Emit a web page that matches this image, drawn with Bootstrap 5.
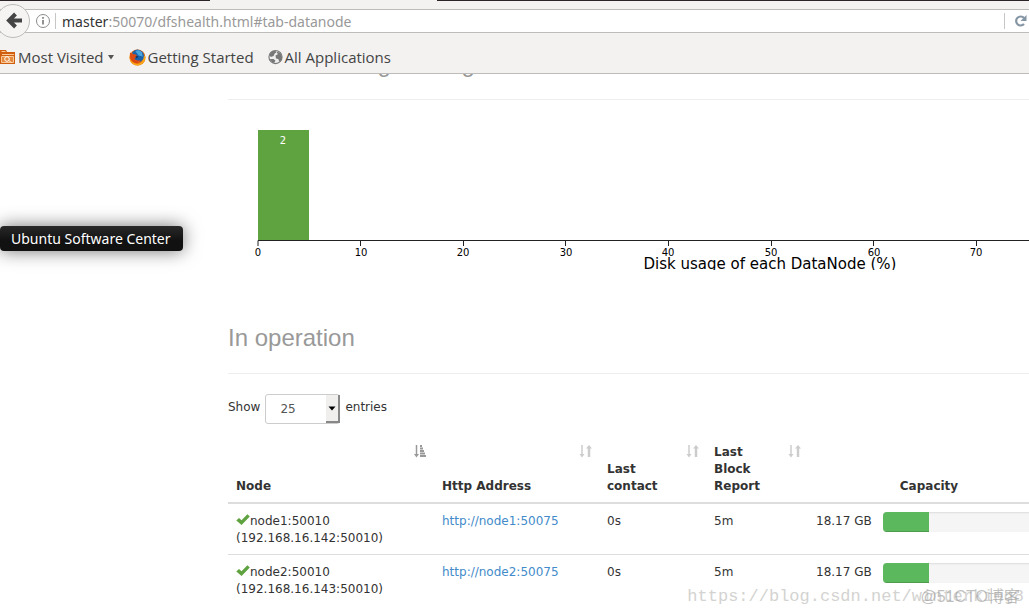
<!DOCTYPE html>
<html lang="en">
<head>
<meta charset="utf-8">
<meta name="viewport" content="width=device-width, initial-scale=1">
<title>Namenode information</title>
<link href="https://cdn.jsdelivr.net/npm/bootstrap@5.3.0/dist/css/bootstrap.min.css" rel="stylesheet">
<style>
body{font-family:"DejaVu Sans",sans-serif;font-size:12px;line-height:17px;color:#333;background:#fff;overflow:hidden}

/* browser frame */
.chrome-bar{background:#f3f2f1;border-bottom:1px solid #bebcb9;font-family:"Open Sans",sans-serif;font-size:15px}
.tab-strip{height:9px}
.tab-strip span{height:1px;background:#2c2428}
.tab-left{width:210px}
.tab-gap{width:227px}
.url-row{height:24px;background:#fff;border-top:1px solid #bebcb9;border-bottom:1px solid #bebcb9;padding-left:35px;font-family:"Noto Sans",sans-serif;font-size:14px}
.back-btn{width:34px;height:34px;left:-4px;top:-6px;border:1px solid #bebcb9;background:#f5f4f3;border-radius:50%;position:absolute;line-height:0}
.url-text{padding-left:6px}
.url-host{color:#333}
.url-rest{color:#999}
.v-line{width:1px;height:16px;background:#c8c6c4}
.bookmarks{height:40px;padding-top:8px;gap:14px}
.bookmarks a{color:#444;text-decoration:none;line-height:20px;gap:2px}
.bookmarks .caret{margin-left:1px}

/* page */
.main-area{margin-left:228px;overflow:hidden}
.section-title{font-family:"Liberation Sans",sans-serif;font-size:24px;line-height:26px;color:#999;font-weight:400;border-bottom:1px solid #eee;margin:0;padding-bottom:22px}
.scrolled-title{height:26px;overflow:hidden;display:flex;flex-direction:column;justify-content:flex-end}
.scrolled-title .section-title{white-space:nowrap}
.chart{display:block;width:1140px;height:170px;overflow:hidden}
.chart text{font-size:10px;text-anchor:middle}
.chart .axis-title{font-size:15px}
.operation-title{margin-top:55px}
.length-row{margin-top:20px;gap:5px;height:30px}
.length-row label{padding-top:5px}
.entries-select{width:75px;height:30px;border:1px solid #ccc;border-radius:3px;font-size:12px;color:#555;padding:0 14px;appearance:none;background:#fff}
.select-arrow{position:absolute;right:0;top:1px;width:14px;height:28px;background:#f0efee;border-right:2px solid #888;border-bottom:2px solid #888;pointer-events:none}

/* node table */
.table-wrap{margin-top:11px;overflow:hidden}
.node-table{width:calc(100% + 21px);min-width:822px;table-layout:fixed;color:#333;margin:0}
.node-table>:not(caption)>*>*{padding:9px 8px 7px;border:0;box-shadow:none;color:#333}
.node-table>thead>tr>th{vertical-align:bottom;border-bottom:2px solid #ddd;position:relative}
.node-table>tbody>tr+tr>td{border-top:1px solid #ddd}
.node-table a{color:#428bca;text-decoration:none}
.sort-icon{position:absolute;right:7px;top:9px;width:14px;height:14px}
.tick-mark{vertical-align:-1px}
.col-node{width:206px}
.col-http{width:165px}
.col-contact{width:107px}
.col-report{width:102px}
.cap-bar{height:20px;margin-top:-1px;border-radius:4px;background:#f5f5f5;box-shadow:inset 0 1px 2px rgba(0,0,0,.1)}
.cap-bar .progress-bar{background:#5cb85c;box-shadow:inset 0 -1px 0 rgba(0,0,0,.15)}
.cap-text{width:67px;white-space:nowrap}

/* overlays */
.launcher-tip{position:absolute;left:0;top:226px;height:25px;padding:0 12px 0 11px;line-height:25px;border-radius:4px;background:linear-gradient(#292929,#111 60%);color:#fff;font-family:"Noto Sans",sans-serif;font-size:14px;box-shadow:0 0 18px rgba(0,0,0,.55)}
.stamp-url{position:absolute;right:5px;top:586px;font:17px/22px "Liberation Mono",monospace;color:#d3d3d1}
.stamp-site{position:absolute;right:9px;top:587px;font:16px/20px "Liberation Sans","Noto Sans CJK SC",sans-serif;color:rgba(150,150,150,.6)}
</style>
</head>
<body class="position-relative min-vh-100">
<svg width="0" height="0" class="position-absolute">
  <symbol id="sort-both" viewBox="0 0 14 14"><path d="M1.500 10h5L4 13.500zM8 4.500h6L11 1z" fill="#ccc"/><path d="M4 1v10" stroke="#ccc" stroke-width="1.500"/><path d="M11 4v9" stroke="#ccc" stroke-width="2.500"/></symbol>
  <symbol id="sort-asc" viewBox="0 0 14 14"><path d="M1 10h5L3.500 13.500z" fill="#999"/><path d="M3.500 1v10" stroke="#999" stroke-width="1.500"/><path d="M7 2h2M7 4.500h3M7 7h4M7 9.500h5M7 12h6" stroke="#999" stroke-width="1.900"/></symbol>
  <symbol id="check" viewBox="0 0 14 12"><path d="M.3 6.600 3 4l2.500 2.300L11.400.3l2.400 2.300L5.600 11z" fill="#5fa341"/></symbol>
</svg>
<header class="chrome-bar">
  <div class="tab-strip d-flex"><span class="tab-left"></span><div class="tab-gap"></div><span class="flex-grow-1"></span></div>
  <div class="url-row d-flex align-items-center position-relative">
    <button class="back-btn p-0" type="button" aria-label="Back"><svg width="32" height="32" viewBox="0 0 32 32"><path d="M18.500 9 12 15.500l6.500 6.500M13 15.500h12" fill="none" stroke="#444" stroke-width="4"/></svg></button>
    <svg width="16" height="16" viewBox="0 0 16 16"><circle cx="8" cy="8" r="6.500" fill="none" stroke="#8c8c8c"/><path d="M8 7v4.500M8 4v1.800" stroke="#777" stroke-width="1.600"/></svg>
    <div class="v-line ms-1"></div>
    <div class="flex-grow-1 url-text" role="textbox" aria-label="Address"><span class="url-host">master</span><span class="url-rest">:50070/dfshealth.html#tab-datanode</span></div>
    <div class="v-line"></div>
    <button class="btn p-0 border-0 d-flex ms-2" type="button" aria-label="Reload"><svg width="16" height="14" viewBox="0 0 16 14"><path d="M11 4A4.500 4.500 0 1 0 11 10" fill="none" stroke="#8495a3" stroke-width="2.200"/><path d="M13.500 1v6h-6z" fill="#8495a3"/></svg></button>
  </div>
  <nav class="bookmarks d-flex align-items-center">
    <a href="#" class="d-flex align-items-center"><svg width="16" height="16" viewBox="0 0 16 16"><path d="M0 1h6l1 2h8v12H0z" fill="#cf5f0e"/><path d="M1.500 2.500h4M2 5.500h12M1.500 7.500v6h12v-6z" stroke="#f9c894" fill="#e58a3c"/><circle cx="7" cy="10" r="2.300" fill="none" stroke="#fff"/><path d="m9 11.500 2 2" stroke="#fff"/></svg>Most Visited<svg class="caret" width="8" height="6" viewBox="0 0 8 6"><path d="M1 1h6L4 5.500z" fill="#555"/></svg></a>
    <a href="#" class="d-flex align-items-center"><svg width="17" height="17" viewBox="0 0 16 16"><circle cx="8" cy="8" r="7.500" fill="#e8690b"/><path d="M3 3Q8-2 13 3l2 5-4 4-6-2z" fill="#1c62ab"/><path d="M6 2q4-2 6 1l1 4-4-1z" fill="#49a5dd"/><path d="M1 3q-1 6 2 9 5 4 9 0 2-2 2-6l1.400 1Q16 13 10 15.300 4 16.500 1 11 0 7 1 3z" fill="#f7a81b"/><path d="M1 3l2 2 3 0 2 2-3 2q2 3 6 1-2 4-6 3Q0 11 1 3z" fill="#dd4a12"/><path d="M6 7q2-1 3 0l-2 2z" fill="#15365f"/></svg>Getting Started</a>
    <a href="#" class="d-flex align-items-center"><svg width="15" height="16" viewBox="0 0 16 16"><circle cx="8" cy="8" r="7" fill="#eee" stroke="#777" stroke-width="1.200"/><path d="M1.500 6Q2 3 5 1.500l3 0 1 1.500-2 1.500-1 2.500-3 1zM9 2l4 1.500L15 8l-1 3.500-2 1.500-1-3-2.500-.5L8 6.500 10.500 5zM2 10l4 0 2 2-1.500 2.500q-3-1-4.500-4.500z" fill="#777"/></svg>All Applications</a>
  </nav>
</header>
<main class="main-area">
  <div class="scrolled-title"><h3 class="section-title">Datanode usage histogram</h3></div>
  <svg class="chart" viewBox="0 0 1140 170" role="img" aria-label="Disk usage of each DataNode">
    <rect x="30" y="30" width="51" height="111" fill="#5fa341"/>
    <text x="55" y="44" fill="#fff">2</text>
    <path d="M30 146v-5.500H1057V146M132.500 140v6M235.500 140v6M337.500 140v6M440.500 140v6M543.500 140v6M645.500 140v6M748.500 140v6" fill="none" stroke="#222"/>
    <text x="30" y="156">0</text><text x="133" y="156">10</text><text x="235" y="156">20</text><text x="338" y="156">30</text><text x="440" y="156">40</text><text x="543" y="156">50</text><text x="646" y="156">60</text><text x="748" y="156">70</text>
    <text class="axis-title" x="542" y="169">Disk usage of each DataNode (%)</text>
  </svg>
  <h3 class="section-title operation-title">In operation</h3>
  <div class="length-row d-flex">
    <label for="entries">Show</label>
    <div class="position-relative">
      <select id="entries" class="entries-select"><option>10</option><option selected>25</option><option>50</option></select>
      <span class="select-arrow d-flex align-items-center justify-content-center"><svg width="8" height="5" viewBox="0 0 8 5"><path d="M.5.5h7L4 4.500z"/></svg></span>
    </div>
    <label for="entries">entries</label>
  </div>
  <div class="table-wrap">
    <table class="table node-table">
      <colgroup><col class="col-node"><col class="col-http"><col class="col-contact"><col class="col-report"><col></colgroup>
      <thead>
        <tr>
          <th>Node<svg class="sort-icon"><use href="#sort-asc"/></svg></th>
          <th>Http Address<svg class="sort-icon"><use href="#sort-both"/></svg></th>
          <th>Last<br>contact<svg class="sort-icon"><use href="#sort-both"/></svg></th>
          <th>Last<br>Block<br>Report<svg class="sort-icon"><use href="#sort-both"/></svg></th>
          <th class="text-center">Capacity</th>
        </tr>
      </thead>
      <tbody>
        <tr>
          <td><svg class="tick-mark" width="14" height="12"><use href="#check"/></svg>node1:50010 (192.168.16.142:50010)</td>
          <td><a href="#">http://node1:50075</a></td>
          <td>0s</td><td>5m</td>
          <td><div class="d-flex"><span class="cap-text">18.17 GB</span><div class="progress cap-bar flex-grow-1"><div class="progress-bar" style="width:29%"></div></div></div></td>
        </tr>
        <tr>
          <td><svg class="tick-mark" width="14" height="12"><use href="#check"/></svg>node2:50010 (192.168.16.143:50010)</td>
          <td><a href="#">http://node2:50075</a></td>
          <td>0s</td><td>5m</td>
          <td><div class="d-flex"><span class="cap-text">18.17 GB</span><div class="progress cap-bar flex-grow-1"><div class="progress-bar" style="width:29%"></div></div></div></td>
        </tr>
      </tbody>
    </table>
  </div>
</main>
<div class="launcher-tip">Ubuntu Software Center</div>
<div class="stamp-url">https://blog.csdn.net/winterking8</div>
<div class="stamp-site">@51CTO博客</div>
<script src="https://cdn.jsdelivr.net/npm/bootstrap@5.3.0/dist/js/bootstrap.bundle.min.js"></script>
</body>
</html>
